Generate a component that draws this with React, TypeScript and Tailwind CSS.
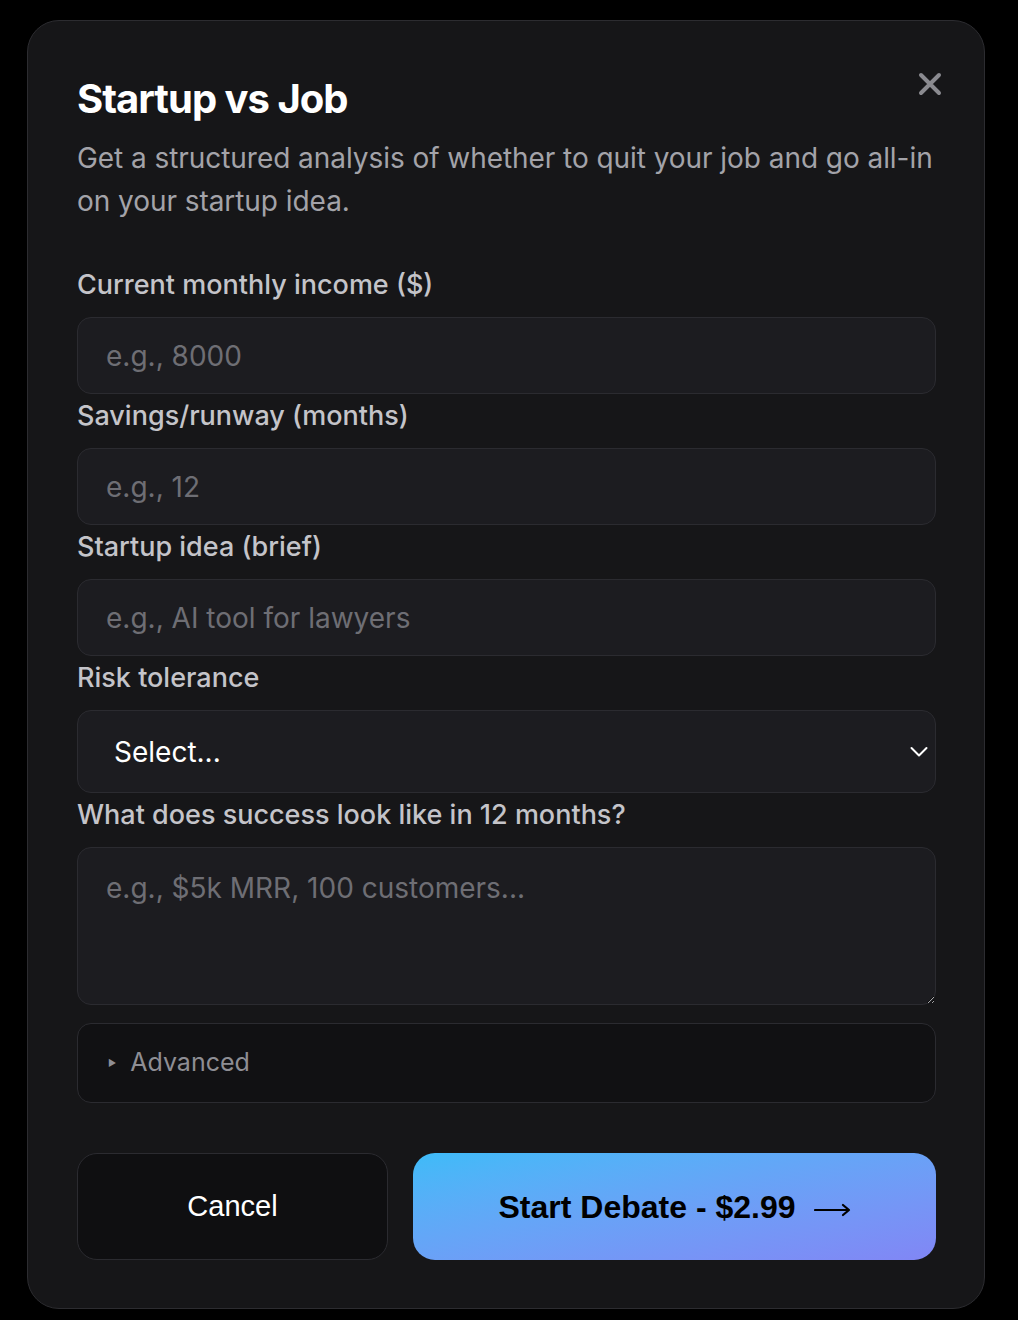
import { useState } from "react";

const inputClass =
  "block h-[77px] w-full rounded-[14px] border border-[#2b2b30] bg-[#1c1c20] px-[28px] text-[28px] text-white outline-none placeholder:text-[#6e6e74]";

function Label({ children }: { children: React.ReactNode }) {
  return (
    <label className="mt-[4px] mb-[14px] block text-[27px] leading-[36px] font-medium text-[#c4c4c9]">
      {children}
    </label>
  );
}

export default function App() {
  const [risk, setRisk] = useState("");

  return (
    <div
      className="min-h-[1320px] bg-black pt-[20px] pr-[33px] pb-[12px] pl-[27px]"
      style={{ fontFamily: "Inter, 'Noto Sans', sans-serif" }}
    >
      <div className="relative rounded-[32px] border border-[#2c2c30] bg-[#161618] pt-[54px] pr-[48px] pb-[48px] pl-[49px]">
        <button className="absolute top-[51px] right-[42px] text-[#8a8a8f]">
          <svg width="24" height="24" viewBox="0 0 24 24" fill="none">
            <path
              d="M3 3 21 21M21 3 3 21"
              stroke="currentColor"
              strokeWidth="4"
              strokeLinecap="round"
            />
          </svg>
        </button>

        <h2 className="text-[40px] leading-[48px] font-bold tracking-[-0.025em] text-white">
          Startup vs Job
        </h2>
        <p className="mt-[14px] text-[28px] leading-[43px] tracking-[-0.002em] text-[#a3a3a9]">
          Get a structured analysis of whether to quit your job and go all-in on
          your startup idea.
        </p>

        <div className="mt-[44px]">
          <Label>Current monthly income ($)</Label>
          <input className={inputClass} placeholder="e.g., 8000" />

          <Label>Savings/runway (months)</Label>
          <input className={inputClass} placeholder="e.g., 12" />

          <Label>Startup idea (brief)</Label>
          <input className={inputClass} placeholder="e.g., AI tool for lawyers" />

          <Label>Risk tolerance</Label>
          <div className="relative">
            <select
              value={risk}
              onChange={(e) => setRisk(e.target.value)}
              className="block h-[83px] w-full appearance-none rounded-[14px] border border-[#2b2b30] bg-[#1c1c20] px-[36px] text-[28px] text-white outline-none"
            >
              <option value="">Select...</option>
              <option value="low">Low</option>
              <option value="medium">Medium</option>
              <option value="high">High</option>
            </select>
            <svg
              className="pointer-events-none absolute top-1/2 right-[8px] -translate-y-1/2 text-white"
              width="18"
              height="11"
              viewBox="0 0 18 11"
              fill="none"
            >
              <polyline
                points="1.5,1.5 9,9 16.5,1.5"
                stroke="currentColor"
                strokeWidth="2"
                strokeLinecap="round"
                strokeLinejoin="round"
              />
            </svg>
          </div>

          <Label>What does success look like in 12 months?</Label>
          <textarea
            className="block h-[158px] w-full resize-y rounded-[14px] border border-[#2b2b30] bg-[#1c1c20] px-[28px] py-[22px] text-[28px] leading-[36px] text-white outline-none placeholder:text-[#6e6e74]"
            placeholder="e.g., $5k MRR, 100 customers..."
          />

          <details className="mt-[18px] rounded-[14px] border border-[#2b2b30] bg-[#111113]">
            <summary className="flex h-[78px] cursor-pointer list-none items-center px-[30px] text-[25px] text-[#8e8e94]">
              <span className="mr-[14px] text-[9px] text-[#8e8e94]">▶</span>
              Advanced
            </summary>
          </details>
        </div>

        <div className="mt-[50px] flex gap-[25px]">
          <button
            className="h-[107px] w-[311px] shrink-0 rounded-[20px] border border-[#2b2b30] bg-[#0f0f11] text-[29px] text-white"
            style={{ fontFamily: "'Liberation Sans', Arial, sans-serif" }}
          >
            Cancel
          </button>
          <button
            className="flex h-[107px] flex-1 items-center justify-center gap-[18px] rounded-[22px] bg-gradient-to-br from-[#3dbbf8] to-[#8186f5] text-[32px] font-bold text-black"
            style={{ fontFamily: "'Liberation Sans', Arial, sans-serif" }}
          >
            <span>Start Debate - $2.99</span>
            <svg
              className="mt-[6px]"
              width="37"
              height="14"
              viewBox="0 0 37 14"
              fill="none"
            >
              <path
                d="M1 7H35M29 2 35 7 29 12"
                stroke="currentColor"
                strokeWidth="2.2"
                strokeLinecap="round"
                strokeLinejoin="round"
              />
            </svg>
          </button>
        </div>
      </div>
    </div>
  );
}
